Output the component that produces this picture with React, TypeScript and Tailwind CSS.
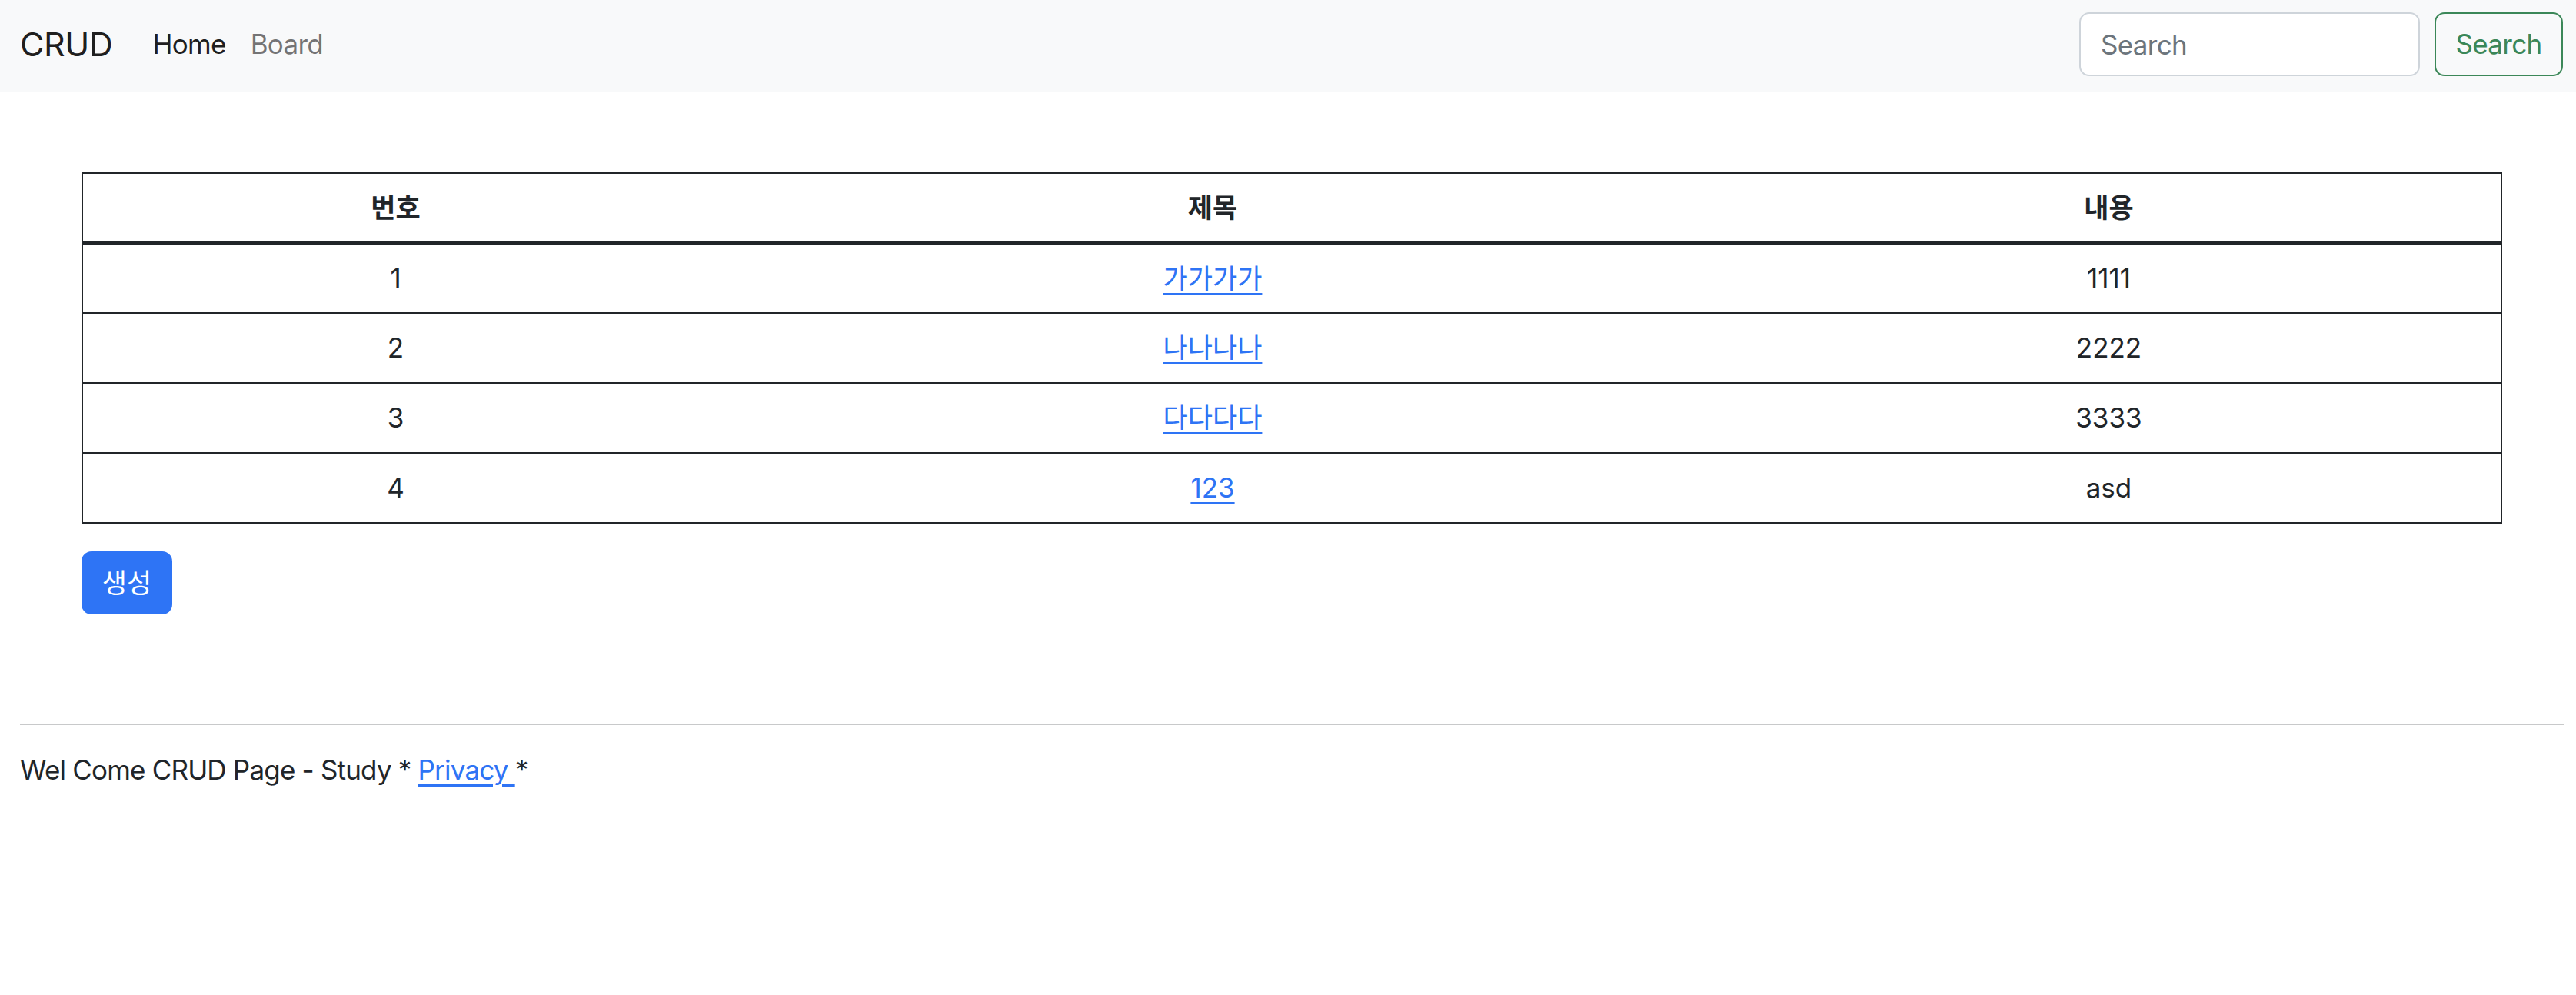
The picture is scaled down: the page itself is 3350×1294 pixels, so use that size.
import React from 'react';

const posts = [
  { id: 1, title: '가가가가', content: '1111' },
  { id: 2, title: '나나나나', content: '2222' },
  { id: 3, title: '다다다다', content: '3333' },
  { id: 4, title: '123', content: 'asd' },
];

const App = () => {
  return (
    <div className="min-h-screen bg-white font-[Inter,'Noto_Sans_CJK_KR',sans-serif] text-[35px] leading-[1.5] text-[#212529]">
      {/* Navbar */}
      <nav className="flex h-[119px] items-center bg-[#f8f9fa] pb-[4px] pl-[26px] pr-[17px]">
        <a href="#" className="mr-[36px] text-[43px] leading-[1.5] tracking-[-0.01em] text-black/90">
          CRUD
        </a>
        <a href="#" className="px-[16px] tracking-[-0.02em] text-black/90">
          Home
        </a>
        <a href="#" className="px-[16px] tracking-[-0.02em] text-black/55">
          Board
        </a>
        <form className="ml-auto flex gap-[19px]" onSubmit={(e) => e.preventDefault()}>
          <input
            type="search"
            placeholder="Search"
            className="h-[83px] w-[443px] rounded-[13px] border-2 border-[#ced4da] bg-white px-[26px] text-[35px] tracking-[-0.02em] outline-none placeholder:text-[#6c757d]"
          />
          <button
            type="submit"
            className="h-[83px] w-[167px] rounded-[13px] border-2 border-[#3b8758] tracking-[-0.02em] text-[#3b8758]"
          >
            Search
          </button>
        </form>
      </nav>

      {/* Board list */}
      <main className="pl-[106px] pr-[96px] pt-[105px]">
        <table className="w-full border-collapse border-2 border-[#212529] text-center">
          <thead>
            <tr className="border-b-[5px] border-[#212529]">
              <th className="h-[91px] w-[814px] font-bold">번호</th>
              <th className="h-[91px] w-[1312px] font-bold">제목</th>
              <th className="h-[91px] font-bold">내용</th>
            </tr>
          </thead>
          <tbody>
            {posts.map((post) => (
              <tr key={post.id} className="border-b-2 border-[#212529]">
                <td className="h-[91px]">{post.id}</td>
                <td className="h-[91px]">
                  <a href="#" className="text-[#2e74f5] underline underline-offset-[6px]">
                    {post.title}
                  </a>
                </td>
                <td className="h-[91px]">{post.content}</td>
              </tr>
            ))}
          </tbody>
        </table>
        <button className="mt-[36px] flex h-[82px] w-[118px] items-center justify-center rounded-[13px] bg-[#2e74f5] text-white">
          생성
        </button>
      </main>

      {/* Footer */}
      <footer className="pl-[26px] pr-[16px] pt-[142px]">
        <hr className="border-t-2 border-[#c8c9ca]" />
        <p className="mt-[32px] tracking-[-0.023em]">
          Wel Come CRUD Page - Study *{' '}
          <a href="#" className="text-[#2e74f5] underline underline-offset-[6px]">
            Privacy&nbsp;
          </a>
          *
        </p>
      </footer>
    </div>
  );
};

export default App;
